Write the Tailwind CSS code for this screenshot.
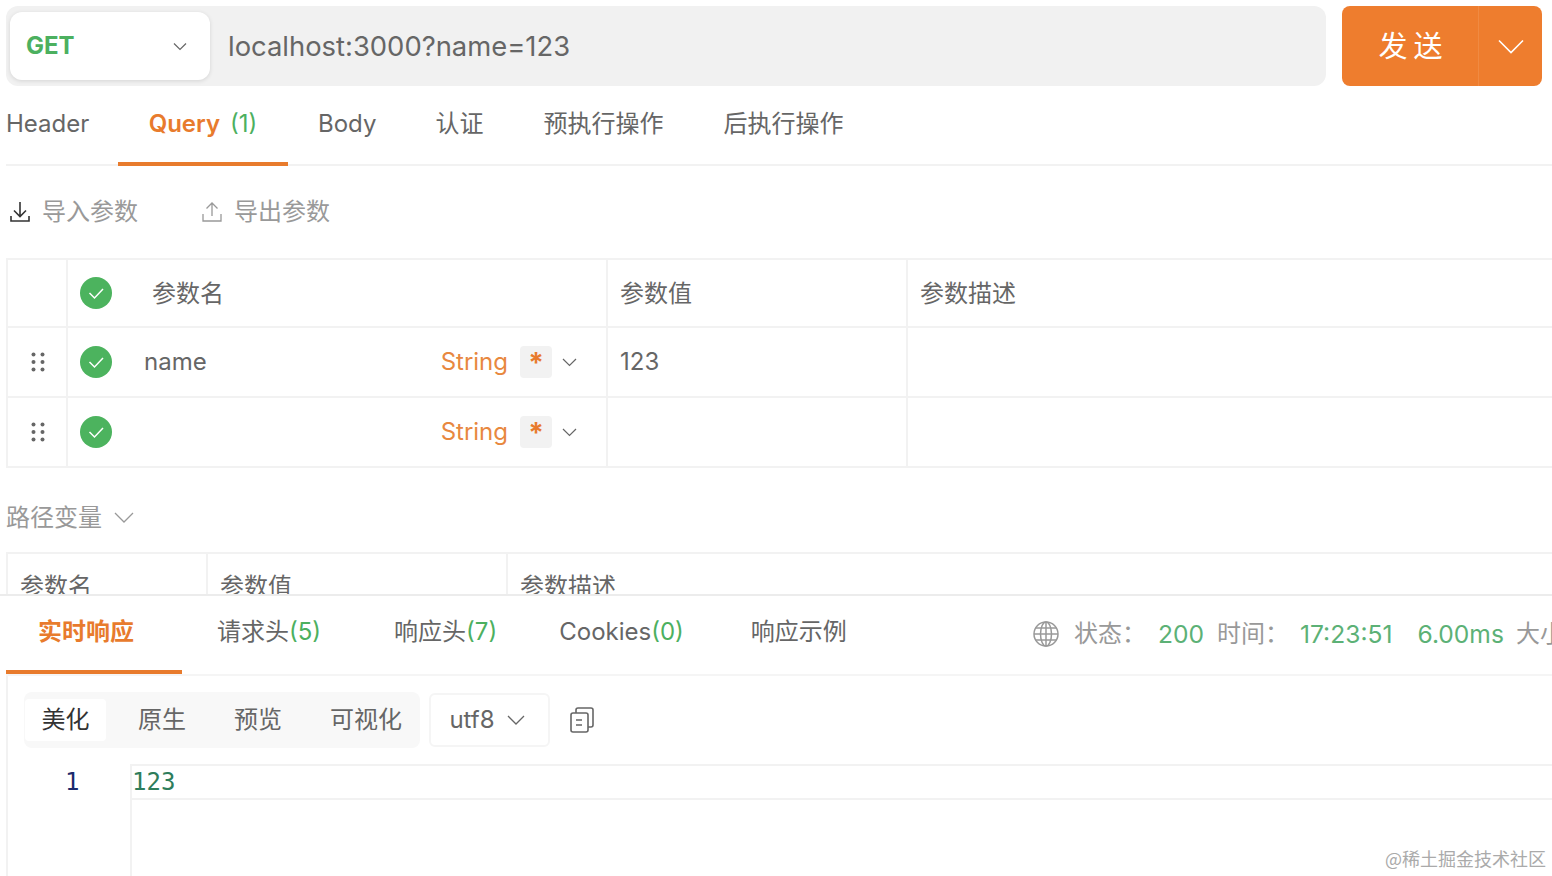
<!DOCTYPE html>
<html lang="zh-CN">
<head>
  <meta charset="UTF-8">
  <title>API Debug</title>
  <script src="https://cdn.jsdelivr.net/npm/@tailwindcss/browser@4"></script>
</head>
<body class="bg-white overflow-hidden">
<div class="relative w-[1552px] h-[876px] overflow-hidden font-['Inter','Noto_Sans_CJK_SC',sans-serif] text-[24px] text-[#666666]">

  <!-- Request section -->
  <div class="h-[594px] overflow-hidden pl-[6px]">
    <!-- URL bar -->
    <div class="flex pt-[6px] h-[86px]">
      <div class="w-[1320px] h-[80px] rounded-xl bg-[#f1f1f1] flex items-center pl-[4px]">
        <div class="w-[200px] h-[68px] rounded-xl bg-white shadow-[0_1px_4px_rgba(0,0,0,0.12)] flex items-center justify-between pl-[16px] pr-[23px]">
          <span class="font-bold text-[#4cb05f] text-[24px]">GET</span>
          <svg class="w-[14px] h-[9px] text-[#666666]" viewBox="0 0 14 9" fill="none" stroke="currentColor" stroke-width="1.2"><path d="M1 1.500l6 6 6-6"/></svg>
        </div>
        <span class="ml-[18px] pt-[1px] text-[27.4px] text-[#666666]">localhost:3000?name=123</span>
      </div>
      <div class="ml-[16px] w-[200px] h-[80px] rounded-lg bg-[#ee7d2e] flex items-center text-white">
        <div class="w-[137px] h-full flex items-center justify-center pt-[2px] text-[29px] tracking-[-1px] border-r border-[#f08a42]">发 送</div>
        <div class="flex-1 flex items-center justify-center">
          <svg class="w-[26px] h-[15px]" viewBox="0 0 26 15" fill="none" stroke="currentColor" stroke-width="1.6"><path d="M1 1.500l12 12 12-12"/></svg>
        </div>
      </div>
    </div>

    <!-- Tabs -->
    <div class="flex items-stretch h-[80px] border-b-2 border-[#f2f2f2] text-[24px]">
      <div class="flex items-center w-[112px] pb-[2px]">Header</div>
      <div class="relative w-[170px] flex items-center justify-center pb-[2px]">
        <span class="font-semibold text-[#e87b2d]">Query</span><span class="ml-[10px] text-[#4cb05f]">(1)</span>
        <div class="absolute left-0 right-0 bottom-[-2px] h-[4px] bg-[#e87b2d]"></div>
      </div>
      <div class="flex items-center ml-[30px] pb-[2px]">Body</div>
      <div class="flex items-center ml-[59px] pb-[2px]">认证</div>
      <div class="flex items-center ml-[60px] pb-[2px]">预执行操作</div>
      <div class="flex items-center ml-[60px] pb-[2px]">后执行操作</div>
    </div>

    <!-- Import / export -->
    <div class="flex items-center h-[92px] text-[#999999] pl-[4px]">
      <svg class="w-[20px] h-[22px] text-[#333333]" viewBox="0 0 20 22" fill="none" stroke="currentColor" stroke-width="1.6"><path d="M10 1v14M4 9.500l6 6 6-6M1 15v5h18v-5"/></svg>
      <span class="ml-[12px]">导入参数</span>
      <svg class="ml-[64px] w-[20px] h-[22px]" viewBox="0 0 20 22" fill="none" stroke="currentColor" stroke-width="1.3"><path d="M10 15V2M4.500 7.500L10 2l5.500 5.500M1 13v7h18v-7"/></svg>
      <span class="ml-[12px]">导出参数</span>
    </div>

    <!-- Query params table -->
    <div class="border-2 border-r-0 border-[#f2f2f2] w-[1546px]">
      <div class="flex h-[68px] border-b-2 border-[#f2f2f2]">
        <div class="w-[60px] border-r-2 border-[#f2f2f2]"></div>
        <div class="w-[540px] border-r-2 border-[#f2f2f2] flex items-center pl-[12px]">
          <svg class="w-[32px] h-[32px]" viewBox="0 0 32 32"><circle cx="16" cy="16" r="16" fill="#4cb35e"/><path d="M9.500 16l5 5 8.500-9" fill="none" stroke="#fff" stroke-width="1.500"/></svg>
          <span class="ml-[40px] pt-[2px]">参数名</span>
        </div>
        <div class="w-[300px] border-r-2 border-[#f2f2f2] flex items-center pl-[12px] pt-[2px]">参数值</div>
        <div class="flex-1 flex items-center pl-[12px] pt-[2px]">参数描述</div>
      </div>
      <div class="flex h-[70px] border-b-2 border-[#f2f2f2]">
        <div class="w-[60px] border-r-2 border-[#f2f2f2] flex items-center justify-center pl-[2px]">
          <svg class="w-[14px] h-[20px]" viewBox="0 0 14 20" fill="#666666"><circle cx="2.500" cy="2.500" r="2"/><circle cx="11.500" cy="2.500" r="2"/><circle cx="2.500" cy="10" r="2"/><circle cx="11.500" cy="10" r="2"/><circle cx="2.500" cy="17.500" r="2"/><circle cx="11.500" cy="17.500" r="2"/></svg>
        </div>
        <div class="w-[540px] border-r-2 border-[#f2f2f2] flex items-center pl-[12px]">
          <svg class="w-[32px] h-[32px]" viewBox="0 0 32 32"><circle cx="16" cy="16" r="16" fill="#4cb35e"/><path d="M9.500 16l5 5 8.500-9" fill="none" stroke="#fff" stroke-width="1.500"/></svg>
          <span class="ml-[32px]">name</span>
          <span class="ml-auto text-[#e8883f]">String</span>
          <span class="ml-[12px] w-[32px] h-[32px] rounded bg-[#f2f2f2] flex items-start justify-center text-[#e87b2d] text-[28px] font-bold leading-[34px]">*</span>
          <svg class="ml-[10px] mr-[29px] w-[15px] h-[9px]" viewBox="0 0 15 9" fill="none" stroke="#666666" stroke-width="1.200"><path d="M1 1l6.500 6.500L14 1"/></svg>
        </div>
        <div class="w-[300px] border-r-2 border-[#f2f2f2] flex items-center pl-[12px]">123</div>
        <div class="flex-1"></div>
      </div>
      <div class="flex h-[68px]">
        <div class="w-[60px] border-r-2 border-[#f2f2f2] flex items-center justify-center pl-[2px]">
          <svg class="w-[14px] h-[20px]" viewBox="0 0 14 20" fill="#666666"><circle cx="2.500" cy="2.500" r="2"/><circle cx="11.500" cy="2.500" r="2"/><circle cx="2.500" cy="10" r="2"/><circle cx="11.500" cy="10" r="2"/><circle cx="2.500" cy="17.500" r="2"/><circle cx="11.500" cy="17.500" r="2"/></svg>
        </div>
        <div class="w-[540px] border-r-2 border-[#f2f2f2] flex items-center pl-[12px]">
          <svg class="w-[32px] h-[32px]" viewBox="0 0 32 32"><circle cx="16" cy="16" r="16" fill="#4cb35e"/><path d="M9.500 16l5 5 8.500-9" fill="none" stroke="#fff" stroke-width="1.500"/></svg>
          <span class="ml-auto text-[#e8883f]">String</span>
          <span class="ml-[12px] w-[32px] h-[32px] rounded bg-[#f2f2f2] flex items-start justify-center text-[#e87b2d] text-[28px] font-bold leading-[34px]">*</span>
          <svg class="ml-[10px] mr-[29px] w-[15px] h-[9px]" viewBox="0 0 15 9" fill="none" stroke="#666666" stroke-width="1.200"><path d="M1 1l6.500 6.500L14 1"/></svg>
        </div>
        <div class="w-[300px] border-r-2 border-[#f2f2f2]"></div>
        <div class="flex-1"></div>
      </div>
    </div>

    <!-- Path variables -->
    <div class="flex items-center h-[84px] pt-[16px] text-[#999999]">
      <span>路径变量</span>
      <svg class="ml-[12px] w-[20px] h-[12px]" viewBox="0 0 20 12" fill="none" stroke="currentColor" stroke-width="1.300"><path d="M1 1l9 9 9-9"/></svg>
    </div>
    <div class="flex h-[70px] border-2 border-r-0 border-[#f2f2f2] w-[1546px]">
      <div class="w-[200px] border-r-2 border-[#f2f2f2] pl-[12px] pt-[15px]">参数名</div>
      <div class="w-[300px] border-r-2 border-[#f2f2f2] pl-[12px] pt-[15px]">参数值</div>
      <div class="flex-1 pl-[12px] pt-[15px]">参数描述</div>
    </div>
  </div>

  <!-- Response section -->
  <div class="border-t-2 border-[#ececec] h-[282px] bg-white">
    <div class="flex items-stretch h-[80px] ml-[6px] border-b-2 border-[#f5f5f5] whitespace-nowrap">
      <div class="relative w-[176px] flex items-center justify-center pb-[6px] pr-[16px] font-semibold text-[#e87b2d]">
        实时响应
        <div class="absolute left-0 right-0 bottom-[0px] h-[4px] bg-[#e87b2d]"></div>
      </div>
      <div class="flex items-center ml-[35px] pb-[6px]">请求头<span class="text-[#4cb05f]">(5)</span></div>
      <div class="flex items-center ml-[73px] pb-[6px]">响应头<span class="text-[#4cb05f]">(7)</span></div>
      <div class="flex items-center ml-[62px] pb-[6px]">Cookies<span class="text-[#4cb05f]">(0)</span></div>
      <div class="flex items-center ml-[67px] pb-[6px]">响应示例</div>
      <div class="flex items-center ml-auto pb-[2px] w-[519px] overflow-hidden shrink-0 text-[#999999]">
        <svg class="w-[26px] h-[26px] shrink-0" viewBox="0 0 26 26" fill="none" stroke="#999999" stroke-width="1.500"><circle cx="13" cy="13" r="12"/><ellipse cx="13" cy="13" rx="5.500" ry="12"/><path d="M13 1v24M1 13h24M2.800 7h20.400M2.800 19h20.400"/></svg>
        <span class="ml-[15px]">状态：</span>
        <span class="ml-[12px] text-[24.6px] text-[#5cb176]">200</span>
        <span class="ml-[13px]">时间：</span>
        <span class="ml-[11px] text-[24.6px] text-[#5cb176]">17:23:51</span>
        <span class="ml-[25px] text-[24.6px] text-[#5cb176]">6.00ms</span>
        <span class="ml-[12px]">大小</span>
      </div>
    </div>

    <div class="ml-[6px] border-l-2 border-[#f2f2f2] h-[200px]">
      <!-- Body toolbar -->
      <div class="flex items-center h-[88px] pl-[16px]">
        <div class="flex items-center w-[396px] h-[56px] rounded-lg bg-[#f8f8f8] pl-[1px]">
          <div class="w-[81px] h-[42px] rounded bg-white flex items-center justify-center text-[#333333]">美化</div>
          <div class="ml-[16px] w-[80px] text-center">原生</div>
          <div class="ml-[16px] w-[80px] text-center">预览</div>
          <div class="ml-[20px] w-[96px] text-center">可视化</div>
        </div>
        <div class="ml-[9px] w-[121px] h-[54px] rounded-md border-2 border-[#f5f5f5] flex items-center justify-center pr-[5px]">
          utf8
          <svg class="ml-[12px] w-[18px] h-[10px]" viewBox="0 0 18 10" fill="none" stroke="#666666" stroke-width="1.300"><path d="M1 1l8 8 8-8"/></svg>
        </div>
        <svg class="ml-[20px] w-[24px] h-[26px]" viewBox="0 0 24 26" fill="none" stroke="#666666" stroke-width="1.600"><rect x="1" y="6" width="17" height="19" rx="2"/><path d="M6 6V3a2 2 0 0 1 2-2h13a2 2 0 0 1 2 2v15a2 2 0 0 1-2 2h-3M6 13h6M6 18h6"/></svg>
      </div>
      <!-- Code view -->
      <div class="flex h-[112px]">
        <div class="w-[124px] border-r-2 border-[#f2f2f2] h-full font-['DejaVu_Sans_Mono',monospace] text-[#1a2a6c] pl-[57px] leading-[36px]">1</div>
        <div class="flex-1 h-[36px] border-y-2 border-[#f2f2f2] font-['DejaVu_Sans_Mono',monospace] text-[#2e7d5b] leading-[32px]">123</div>
      </div>
    </div>
  </div>

  <!-- Watermark -->
  <div class="absolute right-[6px] bottom-[4px] text-[18px] text-[#aaaaaa] font-['Noto_Sans_CJK_SC','Liberation_Serif',serif]">@稀土掘金技术社区</div>
</div>
</body>
</html>
